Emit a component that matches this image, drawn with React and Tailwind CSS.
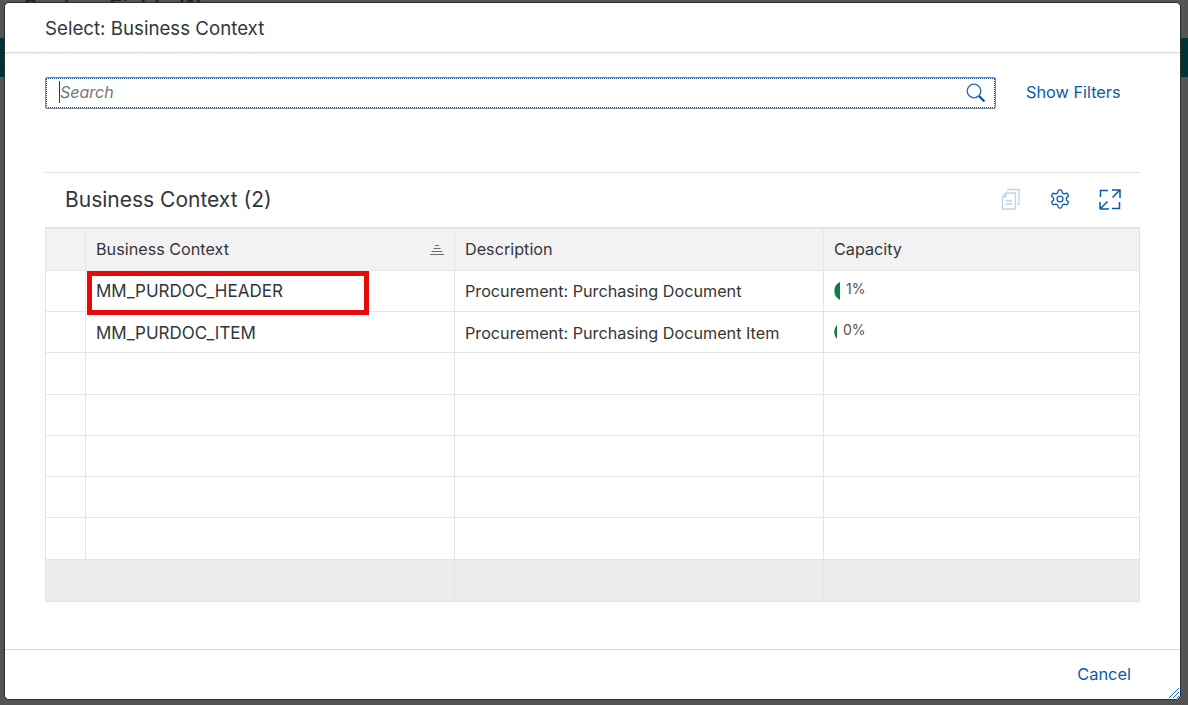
import React from 'react';

const font = { fontFamily: 'Inter, sans-serif' };

const rows = [
  { name: 'MM_PURDOC_HEADER', desc: 'Procurement: Purchasing Document', cap: '1%', w: 6 },
  { name: 'MM_PURDOC_ITEM', desc: 'Procurement: Purchasing Document Item', cap: '0%', w: 3 },
  {}, {}, {}, {}, {},
];

const rowHeights = ['h-[41px]', 'h-[41px]', 'h-[42px]', 'h-[41px]', 'h-[41px]', 'h-[41px]', 'h-[42px]'];

const SearchIcon = () => (
  <svg width="20" height="20" viewBox="0 0 20 20" fill="none">
    <circle cx="8" cy="8" r="6.8" strokeWidth="1.3" stroke="#2a6ab0" />
    <path d="M13 13 L18.5 18.5" strokeWidth="2.2" stroke="#0a4f96" />
  </svg>
);

const CopyIcon = () => (
  <svg width="20" height="22" viewBox="0 0 20 22" fill="none" stroke="#bcd3e8" strokeWidth="1.3">
    <path d="M7 3V1.5h11V16.5h-2" />
    <path d="M5 5h9.5v16H1.5V8.5z" />
    <path d="M5 5v3.5H1.5" />
    <path d="M5 13h6M5 16h6" />
  </svg>
);

const GearIcon = () => (
  <svg width="22" height="22" viewBox="0 0 24 24" fill="none" stroke="#0a5aa8" strokeWidth="1.4">
    <path d="M12.22 2h-.44a2 2 0 0 0-2 2v.18a2 2 0 0 1-1 1.73l-.43.25a2 2 0 0 1-2 0l-.15-.08a2 2 0 0 0-2.73.73l-.22.38a2 2 0 0 0 .73 2.73l.15.1a2 2 0 0 1 1 1.72v.51a2 2 0 0 1-1 1.74l-.15.09a2 2 0 0 0-.73 2.73l.22.38a2 2 0 0 0 2.73.73l.15-.08a2 2 0 0 1 2 0l.43.25a2 2 0 0 1 1 1.73V20a2 2 0 0 0 2 2h.44a2 2 0 0 0 2-2v-.18a2 2 0 0 1 1-1.73l.43-.25a2 2 0 0 1 2 0l.15.08a2 2 0 0 0 2.73-.73l.22-.39a2 2 0 0 0-.73-2.73l-.15-.08a2 2 0 0 1-1-1.74v-.5a2 2 0 0 1 1-1.74l.15-.09a2 2 0 0 0 .73-2.73l-.22-.38a2 2 0 0 0-2.73-.73l-.15.08a2 2 0 0 1-2 0l-.43-.25a2 2 0 0 1-1-1.73V4a2 2 0 0 0-2-2z" />
    <circle cx="12" cy="12" r="3.2" />
  </svg>
);

const ExpandIcon = () => (
  <svg width="22" height="21" viewBox="0 0 22 21" fill="none" stroke="#0a5aa8" strokeWidth="1.5">
    <path d="M1.5 8V1.5H9" />
    <path d="M20.5 13v6.5H13" />
    <path d="M13 1h8v8M21 1l-7.5 7.5" />
    <path d="M1 20h8v-1M1 20v-7M1 20l7.5-7.5" />
  </svg>
);

const SortIcon = () => (
  <svg width="14" height="11" viewBox="0 0 14 11" fill="none" stroke="#6a6d70" strokeWidth="1">
    <path d="M5 1.5h4M3.5 4.5h7M1.5 7.5h11M0 10.5h14" />
  </svg>
);

const Gutter = ({ children, className = '' }) => (
  <div className={`border-r border-[#e5e5e5] ${className}`}>{children}</div>
);

const App = () => {
  return (
    <div className="relative h-[705px] w-[1188px] overflow-hidden bg-[#545454]" style={font}>
      {/* page behind the dim layer */}
      <div className="absolute top-[-9px] left-[22px] text-[22px] font-medium whitespace-nowrap text-[#222]">Custom Fields (1)</div>
      <div className="mt-[38px] h-[39px] bg-[#003337]" />

      <div className="absolute left-[4px] top-[2px] flex h-[698px] w-[1177px] flex-col rounded-[5px] border border-[#2e2e2e] bg-white text-[#32363a]">
        <header className="flex h-[50px] shrink-0 items-center border-b border-[#d9d9d9] pt-[3px] pl-[40px] text-[18.7px] shadow-[0_1px_3px_rgba(0,0,0,0.08)]">
          Select: Business Context
        </header>

        <div className="flex-1 px-[40px]">
          <div className="mt-[24px] flex items-center">
            <div className="flex h-[32px] w-[951px] items-center justify-between rounded-[2px] border border-[#7f8fa3] pr-[9px] pl-[13px] outline-1 -outline-offset-2 outline-dotted outline-[#0a4f96]">
              <span className="mb-[2px] border-l border-[#32363a] text-[16px] leading-[22px] text-[#74777a] italic">Search</span>
              <SearchIcon />
            </div>
            <button className="mb-[2px] ml-[30px] text-[16.3px] text-[#0a5aa8]">Show Filters</button>
          </div>

          <div className="mt-[63px] flex h-[55px] items-center justify-between border-t border-[#e0e0e0] pr-[19px] pl-[20px]">
            <h2 className="text-[21px]">Business Context (2)</h2>
            <div className="mb-[2px] flex items-center gap-[28px]">
              <CopyIcon />
              <GearIcon />
              <ExpandIcon />
            </div>
          </div>

          <div className="relative border border-t-2 border-[#e3e3e3] text-[16.2px]">
            <div className="grid h-[42px] grid-cols-[40px_369px_369px_1fr] border-b border-[#e5e5e5] bg-[#f2f2f2]">
              <Gutter />
              <Gutter className="flex items-center justify-between pr-[10px] pl-[10px]">
                <span>Business Context</span>
                <SortIcon />
              </Gutter>
              <Gutter className="flex items-center pl-[10px]">
                <span>Description</span>
              </Gutter>
              <div className="flex items-center pl-[10px]">
                <span>Capacity</span>
              </div>
            </div>

            {rows.map((row, i) => (
              <div key={i} className={`grid grid-cols-[40px_369px_369px_1fr] border-b border-[#e5e5e5] ${rowHeights[i]}`}>
                <Gutter />
                <Gutter className={`flex items-center pl-[10px] text-[17px] ${i === 1 ? 'pt-[4px]' : 'pt-[2px]'}`}>{row.name}</Gutter>
                <Gutter className={`flex items-center pl-[10px] ${i === 1 ? 'pt-[2px]' : ''}`}>{row.desc}</Gutter>
                <div className="flex items-center pl-[10px]">
                  {row.cap && (
                    <>
                      <svg width={row.w} height="20" viewBox={`0 0 ${row.w} 20`}>
                        <path d={row.w > 3 ? 'M6 1 A 10 10 0 0 0 6 19 Z' : 'M3 3 A 10 10 0 0 0 3 17 Z'} fill="#107e3e" />
                      </svg>
                      <span className="mb-[5px] ml-[6px] text-[14px] text-[#515456]">{row.cap}</span>
                    </>
                  )}
                </div>
              </div>
            ))}

            <div className="grid h-[41px] grid-cols-[40px_369px_369px_1fr] bg-[#ececec]">
              <Gutter />
              <Gutter />
              <Gutter />
              <div />
            </div>

            {/* annotation drawn over the first row */}
            <div className="absolute top-[42px] left-[41px] h-[44px] w-[282px] border-[5px] border-[#e60a0a]" />
          </div>
        </div>

        <footer className="flex h-[50px] shrink-0 items-center justify-end border-t border-[#d9d9d9] pr-[49px] text-[16.4px] text-[#0a5aa8]">
          <button>Cancel</button>
        </footer>

        <svg className="absolute right-0 bottom-0" width="12" height="12" viewBox="0 0 12 12" stroke="#0a6ed1" strokeWidth="1">
          <path d="M1 11 L11 1 M5 11 L11 5 M9 11 L11 9" />
        </svg>
      </div>
    </div>
  );
};

export default App;
